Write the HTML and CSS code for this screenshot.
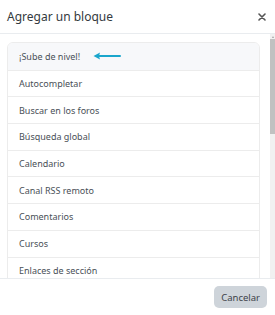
FILE: index.html
```html
<!DOCTYPE html>
<html lang="es">
<head>
    <meta charset="UTF-8">
    <meta name="viewport" content="width=device-width, initial-scale=1.0">
    <title>Agregar un bloque</title>
    <link rel="stylesheet" href="styles.css">
</head>
<body>
    <div class="modal">
        <div class="modal-header">
            <h5 class="modal-title">Agregar un bloque</h5>
            <button class="close-btn" aria-label="Cerrar">
                <svg width="8" height="8" viewBox="0 0 8 8">
                    <path d="M1 1 L7 7 M7 1 L1 7" stroke="#555" stroke-width="1.6" stroke-linecap="round"/>
                </svg>
            </button>
        </div>

        <div class="modal-body">
            <div class="scroll-area">
                <div class="list-group">
                    <a class="list-item active" href="#">¡Sube de nivel!
                        <svg class="arrow" width="28" height="8" viewBox="0 0 28 8">
                            <path d="M4 4 H27" stroke="#1aa6cc" stroke-width="2" stroke-linecap="round"/>
                            <path d="M0.5 4 L7 0.6 L6 4 L7 7.4 Z" fill="#1aa6cc"/>
                        </svg>
                    </a>
                    <a class="list-item" href="#">Autocompletar</a>
                    <a class="list-item" href="#">Buscar en los foros</a>
                    <a class="list-item" href="#">Búsqueda global</a>
                    <a class="list-item" href="#">Calendario</a>
                    <a class="list-item" href="#">Canal RSS remoto</a>
                    <a class="list-item" href="#">Comentarios</a>
                    <a class="list-item" href="#">Cursos</a>
                    <a class="list-item" href="#">Enlaces de sección</a>
                    <a class="list-item" href="#">Entrada aleatoria del glosario</a>
                    <a class="list-item" href="#">Eventos próximos</a>
                    <a class="list-item" href="#">Fechas importantes</a>
                    <a class="list-item" href="#">HTML</a>
                    <a class="list-item" href="#">Insignias recientes</a>
                    <a class="list-item" href="#">Línea de tiempo</a>
                    <a class="list-item" href="#">Mensajes</a>
                    <a class="list-item" href="#">Menú principal</a>
                    <a class="list-item" href="#">Navegación</a>
                </div>
            </div>
            <!-- scrollbar drawn by hand, the renderer hides native ones -->
            <div class="scrollbar">
                <span class="scroll-btn"></span>
                <div class="thumb"></div>
            </div>
        </div>

        <div class="modal-footer">
            <button class="btn-secondary">Cancelar</button>
        </div>
    </div>
</body>
</html>
```

FILE: styles.css
```css
body {
    margin: 0;
    background: #fff;
    font-family: "Noto Sans", "DejaVu Sans", sans-serif;
    color: #495057;
}
.modal {
    width: 275px;
    height: 315px;
    display: flex;
    flex-direction: column;
}
.modal-header {
    height: 33px;
    display: flex;
    align-items: center;
    justify-content: space-between;
    padding: 0 8px 0 7px;
    border-bottom: 1px solid #e9ecef;
}
.modal-title {
    margin: 0;
    font-size: 12px;
    font-weight: 400;
    color: #343a40;
}
.close-btn {
    border: none;
    background: none;
    padding: 0;
    width: 10px;
    height: 10px;
    display: flex;
    align-items: center;
    justify-content: center;
    cursor: pointer;
}
.modal-body {
    height: 244px;
    display: flex;
}
.scroll-area {
    flex: 1;
    overflow: hidden;
    padding: 8px 10px 0 7px;
}
.scrollbar {
    width: 5px;
    background: #f1f1f1;
    display: flex;
    flex-direction: column;
    align-items: center;
}
.scroll-btn {
    width: 0;
    height: 0;
    margin: 2px 0 1px;
    border-left: 1.5px solid transparent;
    border-right: 1.5px solid transparent;
    border-bottom: 2px solid #a3a3a3;
}
.thumb {
    width: 5px;
    height: 95px;
    background: #c1c1c1;
}
.list-group {
    border: 1px solid #ececec;
    border-radius: 6px;
    overflow: hidden;
}
.list-item {
    display: flex;
    align-items: center;
    gap: 13px;
    height: 25.7px;
    padding: 0 11px;
    border-top: 1px solid #ececec;
    font-size: 9px;
    color: #495057;
    text-decoration: none;
}
.list-item:first-child {
    border-top: none;
}
.list-item.active {
    background: #f7f8fa;
    height: 26.7px;
}
.modal-footer {
    flex: 1;
    border-top: 1px solid #e9ecef;
    display: flex;
    align-items: center;
    justify-content: flex-end;
    padding: 0 8px;
}
.btn-secondary {
    font-family: inherit;
    font-size: 9.5px;
    color: #3d4349;
    background: #ced4da;
    border: none;
    border-radius: 5px;
    padding: 0 7px;
    height: 22px;
    cursor: pointer;
}
```
